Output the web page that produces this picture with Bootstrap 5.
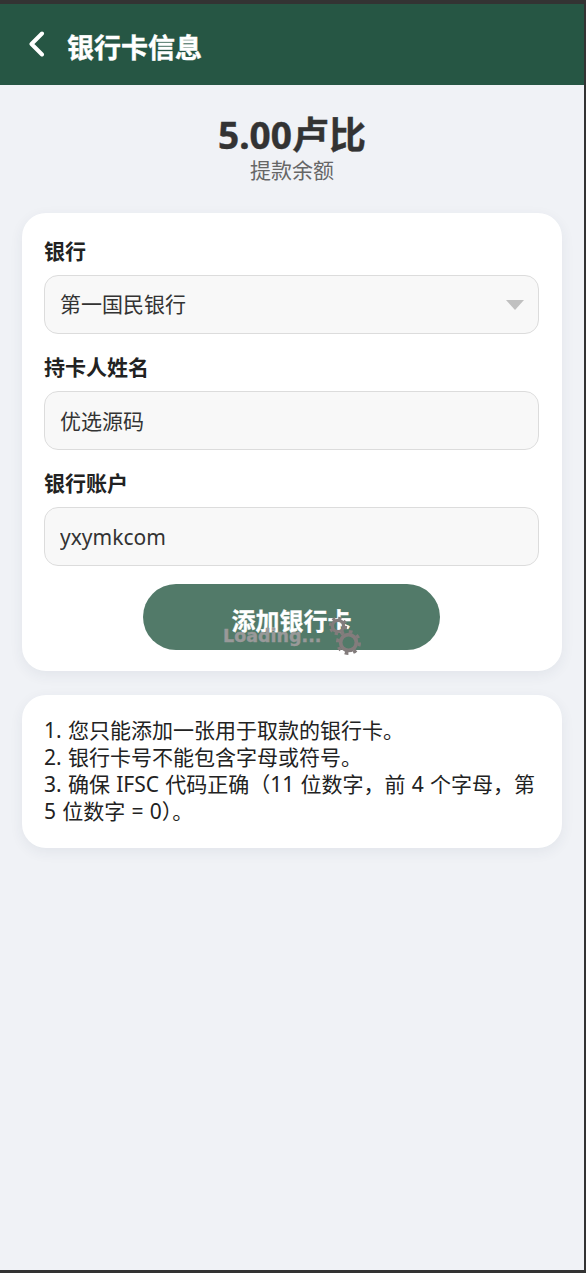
<!DOCTYPE html>
<html lang="zh-CN">
<head>
<meta charset="utf-8">
<title>银行卡信息</title>
<meta name="viewport" content="width=device-width, initial-scale=1">
<link href="https://cdn.jsdelivr.net/npm/bootstrap@5.3.0/dist/css/bootstrap.min.css" rel="stylesheet">
<style>
html,body{height:100%;}
body{margin:0;background:#333;font-family:"Noto Sans","Noto Sans CJK SC",sans-serif;color:#222;overflow:hidden;}
.frame{height:1273px;border-top:4px solid #333;border-right:2px solid #333;border-bottom:3px solid #333;background:#f0f2f6;}
.topbar{height:81px;background:#265644;color:#fff;padding-left:28px;padding-bottom:0;}
.topbar svg{width:17px;height:26px;margin-right:22px;margin-top:-2px;}
.topbar h1{font-size:27px;font-weight:700;margin:5px 0 0;line-height:1;-webkit-text-stroke:.4px #fff;}
.balance{padding-top:25px;height:128px;text-align:center;}
.amount{font-size:37px;font-weight:700;line-height:50px;color:#333;-webkit-text-stroke:.4px #333;}
.amount-label{font-size:21px;line-height:21px;color:#666;}
.sheet{margin:0 22px 24px;background:#fff;border-radius:24px;box-shadow:0 4px 14px rgba(40,50,90,.07);padding:22px;}
.sheet-form{height:458px;padding-top:23px;padding-right:23px;padding-bottom:0;}
.field-label{display:block;font-size:21px;font-weight:700;line-height:30px;margin-bottom:9px;color:#222;}
.field-wrap{position:relative;margin-bottom:18px;}
.form-control.field,.form-select.field{height:59px;border-radius:14px;background-color:#f8f8f8;background-image:none;border:1px solid #dcdcdc;font-size:21px;color:#333;padding:0 15px 1px;font-family:inherit;box-shadow:none;}
.caret{position:absolute;right:15px;top:25px;width:18px;height:10px;pointer-events:none;}
.submit-wrap{position:relative;width:297px;height:66px;margin:0 0 0 99px;}
.btn.submit{width:100%;height:66px;border-radius:33px;border:0;background:#527a69;color:#fff;font-size:24px;font-weight:700;padding:7px 0 0;font-family:inherit;-webkit-text-stroke:.3px #fff;}
.loader{position:absolute;left:80px;top:32px;display:flex;pointer-events:none;}
.loader span{font-family:"DejaVu Sans",sans-serif;font-size:17.5px;font-weight:700;line-height:40px;color:#999;white-space:nowrap;-webkit-text-stroke:.4px #999;}
.gear{position:absolute;}
.gear-a{left:184px;top:31px;width:22px;height:22px;}
.gear-b{left:190.5px;top:43.5px;width:29px;height:29px;}
.sheet-notes{height:153px;padding:22px 22px 0;font-size:21px;line-height:27px;color:#222;word-spacing:.8px;}
.sheet-notes p{margin:0;}
</style>
</head>
<body>
<div class="frame">
  <header class="topbar d-flex align-items-center">
    <svg viewBox="0 0 17 26" aria-hidden="true"><path d="M14 2.5 3.5 13 14 23.5" fill="none" stroke="#fff" stroke-width="4" stroke-linecap="round" stroke-linejoin="round"/></svg>
    <h1>银行卡信息</h1>
  </header>
  <section class="balance">
    <div class="amount">5.00卢比</div>
    <div class="amount-label">提款余额</div>
  </section>
  <form class="sheet sheet-form">
    <label class="field-label">银行</label>
    <div class="field-wrap">
      <select class="form-select field pb-0"><option>第一国民银行</option></select>
      <svg class="caret" viewBox="0 0 18 10" aria-hidden="true"><path d="M0 0h18L9 10z" fill="#c0c0c0"/></svg>
    </div>
    <label class="field-label">持卡人姓名</label>
    <div class="field-wrap">
      <input class="form-control field" value="优选源码">
    </div>
    <label class="field-label">银行账户</label>
    <div class="field-wrap">
      <input class="form-control field pb-0" value="yxymkcom">
    </div>
    <div class="submit-wrap">
      <button type="button" class="btn submit">添加银行卡</button>
      <div class="loader"><span>Loading...</span></div>
      <svg class="gear gear-a" viewBox="0 0 26 26" aria-hidden="true"><circle cx="13" cy="13" r="6.6" fill="none" stroke="#837c7c" stroke-width="4"/><circle cx="13" cy="13" r="9.4" fill="none" stroke="#837c7c" stroke-width="3" stroke-dasharray="3.8 3.58"/></svg>
      <svg class="gear gear-b" viewBox="0 0 28 28" aria-hidden="true"><circle cx="14" cy="14" r="7.6" fill="none" stroke="#837c7c" stroke-width="3.6"/><circle cx="14" cy="14" r="10.6" fill="none" stroke="#837c7c" stroke-width="3" stroke-dasharray="3.6 4.72"/></svg>
    </div>
  </form>
  <section class="sheet sheet-notes">
    <p>1. 您只能添加一张用于取款的银行卡。</p>
    <p>2. 银行卡号不能包含字母或符号。</p>
    <p>3. 确保 IFSC 代码正确（11 位数字，前 4 个字母，第 5 位数字 = 0）。</p>
  </section>
</div>
<script src="https://cdn.jsdelivr.net/npm/bootstrap@5.3.0/dist/js/bootstrap.bundle.min.js"></script>
</body>
</html>
